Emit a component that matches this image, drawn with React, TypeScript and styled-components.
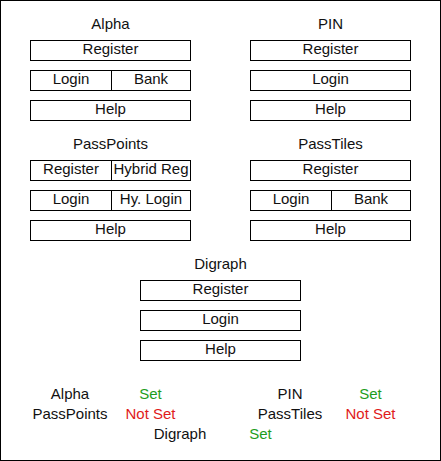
import React from 'react';
import styled, {createGlobalStyle} from 'styled-components';

const GlobalStyle = createGlobalStyle`
  body {
    margin: 0;
    background: white;
    font-family: "Liberation Sans", Arial, sans-serif;
    color: #111;
  }
`;

const Frame = styled.div`
  box-sizing: border-box;
  width: 441px;
  height: 461px;
  border: 1px solid #000;
  padding: 13px 29px 0;
  font-size: 15px;
`;

const Grid = styled.div`
  display: grid;
  grid-template-columns: 161px 161px;
  column-gap: 59px;
  row-gap: 13px;
`;

const Section = styled.div<{$center?: boolean}>`
  display: flex;
  flex-direction: column;
  gap: 9px;
  ${p => p.$center && 'grid-column: 1 / span 2; justify-self: center; width: 161px;'}
`;

const Title = styled.div`
  height: 20px;
  line-height: 20px;
  text-align: center;
  margin-bottom: -3px;
`;

const Button = styled.div<{$split?: boolean}>`
  box-sizing: border-box;
  height: 21px;
  border: 1px solid #000;
  display: grid;
  grid-template-columns: ${p => (p.$split ? '80px 1fr' : '1fr')};

  > span {
    line-height: 16px;
    padding-bottom: 3px;
    text-align: center;
    white-space: nowrap;
  }

  > span + span {
    border-left: 1px solid #000;
  }
`;

const Status = styled.div`
  display: grid;
  grid-template-columns: 161px 161px;
  column-gap: 59px;
  margin-top: 23px;
`;

const StatusRow = styled.div<{$center?: boolean}>`
  display: grid;
  grid-template-columns: 80px 1fr;
  line-height: 20px;
  text-align: center;
  ${p => p.$center && 'grid-column: 1 / span 2; justify-self: center; width: 161px;'}
`;

const Value = styled.span<{$set: boolean}>`
  color: ${p => (p.$set ? '#1e9e1e' : '#e01b1b')};
`;

type Scheme = {
  name: string;
  rows: string[][];
  set: boolean;
};

const schemes: Scheme[] = [
  {name: 'Alpha', rows: [['Register'], ['Login', 'Bank'], ['Help']], set: true},
  {name: 'PIN', rows: [['Register'], ['Login'], ['Help']], set: true},
  {name: 'PassPoints', rows: [['Register', 'Hybrid Reg'], ['Login', 'Hy. Login'], ['Help']], set: false},
  {name: 'PassTiles', rows: [['Register'], ['Login', 'Bank'], ['Help']], set: false},
  {name: 'Digraph', rows: [['Register'], ['Login'], ['Help']], set: true},
];

function App() {
  return (
    <>
      <GlobalStyle/>
      <Frame>
        <Grid>
          {schemes.map((s, i) =>
            <Section key={s.name} $center={i === 4}>
              <Title>{s.name}</Title>
              {s.rows.map(row =>
                <Button key={row.join()} $split={row.length > 1}>
                  {row.map(label => <span key={label}>{label}</span>)}
                </Button>
              )}
            </Section>
          )}
        </Grid>
        <Status>
          {schemes.map((s, i) =>
            <StatusRow key={s.name} $center={i === 4}>
              <span>{s.name}</span>
              <Value $set={s.set}>{s.set ? 'Set' : 'Not Set'}</Value>
            </StatusRow>
          )}
        </Status>
      </Frame>
    </>
  );
}

export default App;
